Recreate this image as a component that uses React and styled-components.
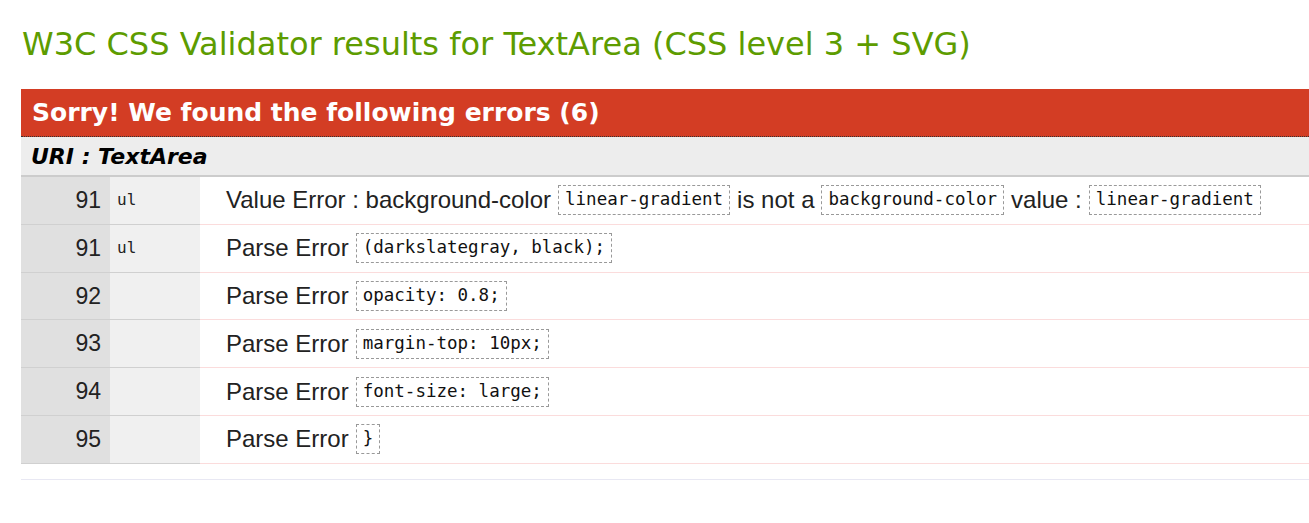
import React from "react";
import styled, { createGlobalStyle } from "styled-components";

const GlobalStyle = createGlobalStyle`
  body {
    margin: 0;
    background: #fff;
    font-family: "Liberation Sans", Arial, sans-serif;
    color: #222;
    overflow: hidden;
  }
`;

const Page = styled.div`
  padding: 21px 0 0 21px;
`;

const Title = styled.h2`
  margin: 0 0 0 1px;
  font-family: "DejaVu Sans", Verdana, sans-serif;
  font-weight: normal;
  font-size: 32px;
  line-height: 46px;
  color: #5d9c00;
`;

const Results = styled.div`
  margin-top: 22px;
`;

const ErrorHeader = styled.div`
  background: #d33d24;
  color: #fff;
  font-family: "DejaVu Sans", Verdana, sans-serif;
  font-weight: bold;
  font-size: 25px;
  height: 47px;
  line-height: 47px;
  padding-left: 11px;
  border-bottom: 1px dotted #333;
`;

const UriRow = styled.div`
  background: #ededed;
  font-family: "DejaVu Sans", Verdana, sans-serif;
  font-style: italic;
  font-weight: bold;
  font-size: 22px;
  height: 38px;
  line-height: 40px;
  padding-left: 10px;
  border-bottom: 2px solid #ccc;
  color: #000;
`;

const Table = styled.div`
  display: grid;
  grid-template-columns: 89px 90px 1fr;
`;

const LineCell = styled.div`
  background: #e0e0e0;
  text-align: right;
  padding-right: 9px;
  font-size: 23px;
  height: 46.8px;
  line-height: 46px;
  border-bottom: 1px solid #d0d0d0;
`;

const ContextCell = styled.div`
  background: #f0f0f0;
  font-family: "DejaVu Sans Mono", monospace;
  font-size: 16px;
  padding-left: 7px;
  height: 46.8px;
  line-height: 46px;
  border-bottom: 1px solid #d0d0d0;
`;

const MessageCell = styled.div`
  padding-left: 26px;
  font-size: 24px;
  height: 46.8px;
  display: flex;
  align-items: center;
  gap: 7px;
  white-space: nowrap;
  border-bottom: 1px solid #fbdcdc;
`;

const Code = styled.span`
  font-family: "DejaVu Sans Mono", monospace;
  font-size: 17.5px;
  border: 1px dashed #999;
  padding: 4px 6px 5px;
  line-height: 19px;
  color: #111;
`;

const FooterRule = styled.div`
  margin-top: 15px;
  border-top: 1px solid #e8e8f3;
`;

const errors = [
  {
    line: 91,
    context: "ul",
    parts: ["Value Error : background-color", { code: "linear-gradient" }, "is not a", { code: "background-color" }, "value :", { code: "linear-gradient" }],
  },
  { line: 91, context: "ul", parts: ["Parse Error", { code: "(darkslategray, black);" }] },
  { line: 92, context: "", parts: ["Parse Error", { code: "opacity: 0.8;" }] },
  { line: 93, context: "", parts: ["Parse Error", { code: "margin-top: 10px;" }] },
  { line: 94, context: "", parts: ["Parse Error", { code: "font-size: large;" }] },
  { line: 95, context: "", parts: ["Parse Error", { code: "}" }] },
];

const App = () => (
  <Page>
    <GlobalStyle />
    <Title>W3C CSS Validator results for TextArea (CSS level 3 + SVG)</Title>
    <Results>
      <ErrorHeader>Sorry! We found the following errors (6)</ErrorHeader>
      <UriRow>URI : TextArea</UriRow>
      <Table>
        {errors.map((err, i) => (
          <React.Fragment key={i}>
            <LineCell>{err.line}</LineCell>
            <ContextCell>{err.context}</ContextCell>
            <MessageCell>
              {err.parts.map((p, j) =>
                typeof p === "string" ? <span key={j}>{p}</span> : <Code key={j}>{p.code}</Code>
              )}
            </MessageCell>
          </React.Fragment>
        ))}
      </Table>
      <FooterRule />
    </Results>
  </Page>
);

export default App;
